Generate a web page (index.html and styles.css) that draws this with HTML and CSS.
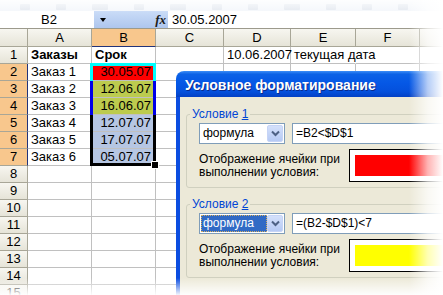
FILE: index.html
```html
<!DOCTYPE html>
<html>
<head>
<meta charset="utf-8">
<link rel="stylesheet" href="styles.css">
</head>
<body>
<div class="screen">
  <div class="toolbar">
    <span class="tbi"></span><span class="tbi"></span><span class="tbi w"></span><span class="tbi"></span><span class="tbi w"></span><span class="tbi"></span><span class="tbi"></span><span class="tbi w"></span><span class="tbi"></span><span class="tbi"></span><span class="tbi"></span>
  </div>
  <div class="fbar">
    <div class="namebox">B2</div>
    <div class="fbar-mid"><span class="arrow"></span><span class="fx">fx</span></div>
    <div class="finput">30.05.2007</div>
  </div>
  <div class="sheet">
    <div class="c h corner"></div><div class="c h">A</div><div class="c h hs hsb">B</div><div class="c h">C</div><div class="c h">D</div><div class="c h">E</div><div class="c h">F</div><div class="c h"></div>

    <div class="c rh">1</div><div class="c b">Заказы</div><div class="c b">Срок</div><div class="c"></div><div class="c r">10.06.2007</div><div class="c nob">текущая дата</div><div class="c"></div><div class="c"></div>

    <div class="c rh hs hsr">2</div><div class="c">Заказ 1</div><div class="c r red">30.05.07</div><div class="c"></div><div class="c"></div><div class="c"></div><div class="c"></div><div class="c"></div>
    <div class="c rh hs hsr">3</div><div class="c">Заказ 2</div><div class="c r ysel">12.06.07</div><div class="c"></div><div class="c"></div><div class="c"></div><div class="c"></div><div class="c"></div>
    <div class="c rh hs hsr">4</div><div class="c">Заказ 3</div><div class="c r ysel">16.06.07</div><div class="c"></div><div class="c"></div><div class="c"></div><div class="c"></div><div class="c"></div>
    <div class="c rh hs hsr">5</div><div class="c">Заказ 4</div><div class="c r sel">12.07.07</div><div class="c"></div><div class="c"></div><div class="c"></div><div class="c"></div><div class="c"></div>
    <div class="c rh hs hsr">6</div><div class="c">Заказ 5</div><div class="c r sel">17.07.07</div><div class="c"></div><div class="c"></div><div class="c"></div><div class="c"></div><div class="c"></div>
    <div class="c rh hs hsr">7</div><div class="c">Заказ 6</div><div class="c r sel">05.07.07</div><div class="c"></div><div class="c"></div><div class="c"></div><div class="c"></div><div class="c"></div>

    <div class="c rh">8</div><div class="c"></div><div class="c"></div><div class="c"></div><div class="c"></div><div class="c"></div><div class="c"></div><div class="c"></div>
    <div class="c rh">9</div><div class="c"></div><div class="c"></div><div class="c"></div><div class="c"></div><div class="c"></div><div class="c"></div><div class="c"></div>
    <div class="c rh">10</div><div class="c"></div><div class="c"></div><div class="c"></div><div class="c"></div><div class="c"></div><div class="c"></div><div class="c"></div>
    <div class="c rh">11</div><div class="c"></div><div class="c"></div><div class="c"></div><div class="c"></div><div class="c"></div><div class="c"></div><div class="c"></div>
    <div class="c rh">12</div><div class="c"></div><div class="c"></div><div class="c"></div><div class="c"></div><div class="c"></div><div class="c"></div><div class="c"></div>
    <div class="c rh">13</div><div class="c"></div><div class="c"></div><div class="c"></div><div class="c"></div><div class="c"></div><div class="c"></div><div class="c"></div>
    <div class="c rh">14</div><div class="c"></div><div class="c"></div><div class="c"></div><div class="c"></div><div class="c"></div><div class="c"></div><div class="c"></div>
    <div class="c rh">15</div><div class="c"></div><div class="c"></div><div class="c"></div><div class="c"></div><div class="c"></div><div class="c"></div><div class="c"></div>

    <div class="selbox"></div>
    <div class="handle"></div>
  </div>

  <div class="dialog">
    <div class="dtitle">Условное форматирование</div>
    <div class="dbody">
      <fieldset class="group">
        <legend>Условие <u>1</u></legend>
        <div class="grow">
          <div class="combo"><span class="ctext">формула</span><span class="cbtn"><svg width="9" height="7" viewBox="0 0 9 7"><path d="M1 1.5 L4.5 5 L8 1.5" fill="none" stroke="#4d6185" stroke-width="2"/></svg></span></div>
          <div class="finp">=B2&lt;$D$1</div>
        </div>
        <div class="grow2">
          <div class="ptext">Отображение ячейки при<br>выполнении условия:</div>
          <div class="preview"><div class="swatch red"></div></div>
        </div>
      </fieldset>
      <fieldset class="group g2">
        <legend>Условие <u>2</u></legend>
        <div class="grow">
          <div class="combo"><span class="ctext focus">формула</span><span class="cbtn"><svg width="9" height="7" viewBox="0 0 9 7"><path d="M1 1.5 L4.5 5 L8 1.5" fill="none" stroke="#4d6185" stroke-width="2"/></svg></span></div>
          <div class="finp">=(B2-$D$1)&lt;7</div>
        </div>
        <div class="grow2">
          <div class="ptext">Отображение ячейки при<br>выполнении условия:</div>
          <div class="preview"><div class="swatch yellow"></div></div>
        </div>
      </fieldset>
    </div>
  </div>

  <div class="fade fade-top"></div>
  <div class="fade fade-right"></div>
  <div class="fade fade-bottom"></div>
</div>
</body>
</html>
```

FILE: styles.css
```css
* { box-sizing: border-box; }
html, body { margin: 0; padding: 0; }
body {
  width: 443px;
  height: 295px;
  overflow: hidden;
  background: #fff;
  font-family: "Liberation Sans", Arial, sans-serif;
  color: #000;
}
.screen {
  position: relative;
  width: 443px;
  height: 295px;
  overflow: hidden;
}

/* toolbar */
.toolbar {
  height: 11px;
  background: #f4f7fb;
  display: flex;
  align-items: flex-end;
  gap: 26px;
  padding: 0 0 1px 20px;
}
.tbi {
  width: 10px;
  height: 6px;
  background: #e4e9f0;
  border-radius: 1px;
}
.tbi.w { width: 16px; }

/* formula bar */
.fbar {
  height: 18px;
  display: flex;
  border-bottom: 1px solid #9c9a8c;
  font-size: 13px;
  line-height: 17px;
}
.namebox {
  width: 94px;
  background: #fff;
  text-align: center;
  padding-left: 4px;
}
.fbar-mid {
  width: 74px;
  background: linear-gradient(#cadcf7, #aec6ee);
  display: flex;
  align-items: center;
  justify-content: space-between;
  padding: 0 2px 0 6px;
}
.arrow {
  width: 0;
  height: 0;
  border-left: 3.5px solid transparent;
  border-right: 3.5px solid transparent;
  border-top: 4px solid #000;
}
.fx {
  font-family: "Liberation Serif", serif;
  font-style: italic;
  font-weight: bold;
  font-size: 13px;
  color: #1a1a1a;
}
.finput {
  flex: 1;
  background: #fff;
  padding-left: 4px;
}

/* sheet */
.sheet {
  position: relative;
  display: grid;
  grid-template-columns: 28px 64px 64px 68px 67px 65px 64px 40px;
  grid-template-rows: 18px;
  grid-auto-rows: 17px;
}
.c {
  border-right: 1px solid #c0c0c0;
  border-bottom: 1px solid #c0c0c0;
  font-size: 13px;
  line-height: 16px;
  padding: 0 4px 0 3px;
  white-space: nowrap;
  overflow: visible;
}
.c.h, .c.rh {
  background: linear-gradient(#f7f6f0, #e6e4d8);
  border-right-color: #a8a697;
  border-bottom-color: #a8a697;
  text-align: center;
  padding: 0;
}
.c.h { line-height: 17px; }
.c.hs { background: #f8c78d; }
.c.hsb { border-bottom-color: #22337a; }
.c.hsr { border-right-color: #22337a; }
.c.b { font-weight: bold; }
.c.r { text-align: right; }
.c.nob { border-right-color: transparent; }
.c.red { background: #ff0000; }
.c.ysel { background: #bccb4e; }
.c.sel { background: #b6c6e3; }

.selbox {
  position: absolute;
  left: 90px;
  top: 34px;
  width: 66px;
  height: 103px;
  border: 3px solid;
  border-image: linear-gradient(to bottom, #00ffff 0, #00ffff 18px, #0000e8 18px, #0000e8 52px, #000 52px) 3;
  pointer-events: none;
}
.handle {
  position: absolute;
  left: 152px;
  top: 133px;
  width: 6px;
  height: 6px;
  background: #000;
  outline: 1px solid #fff;
}

/* dialog */
.dialog {
  position: absolute;
  left: 176px;
  top: 71px;
  width: 340px;
  height: 240px;
  display: flex;
  flex-direction: column;
}
.dtitle {
  height: 26px;
  border-radius: 8px 8px 0 0;
  background: linear-gradient(#3d8ef7 0, #0c62e6 12%, #0558e6 45%, #0450dc 80%, #0340c4 100%);
  color: #fff;
  font-weight: bold;
  font-size: 14px;
  line-height: 29px;
  padding-left: 9px;
  text-shadow: 1px 1px 0 #0a2a8c;
  white-space: nowrap;
}
.dbody {
  flex: 1;
  background: #ece9d8;
  border-left: 4px solid #0b4de0;
  padding: 11px 0 0 6px;
  font-size: 12px;
}
.group {
  margin: 0;
  padding: 2px 0 5px 3px;
  border: 1px solid #d0d0bf;
  border-radius: 3px;
  min-width: 0;
  width: 325px;
}
.group.g2 { margin-top: 10px; }
legend {
  padding: 0 2px;
  font-size: 12px;
  line-height: 13px;
  color: #0046d5;
}
legend u { text-decoration: underline; }
.grow {
  display: flex;
  gap: 7px;
  padding-left: 9px;
}
.combo {
  flex: none;
  width: 86px;
  height: 21px;
  border: 1px solid #7f9db9;
  background: #fff;
  display: flex;
  align-items: center;
  justify-content: space-between;
  padding: 1px;
}
.ctext {
  font-size: 12px;
  line-height: 15px;
  padding-left: 2px;
}
.ctext.focus {
  background: #316ac5;
  color: #fff;
  width: 66px;
  height: 17px;
  border: 1px dotted #d6b060;
  padding-left: 1px;
}
.cbtn {
  width: 16px;
  height: 17px;
  border-radius: 2px;
  background: linear-gradient(#d4e0fb, #b6caf4);
  border: 1px solid #c6d4f6;
  display: flex;
  align-items: center;
  justify-content: center;
}
.finp {
  flex: none;
  width: 200px;
  height: 21px;
  border: 1px solid #7f9db9;
  background: #fff;
  font-size: 12px;
  line-height: 19px;
  padding-left: 3px;
}
.grow2 {
  display: flex;
  align-items: center;
  margin-top: 5px;
  padding-left: 9px;
}
.ptext {
  flex: none;
  width: 150px;
  font-size: 12px;
  line-height: 13px;
  padding-top: 1px;
  white-space: nowrap;
}
.preview {
  flex: none;
  width: 150px;
  height: 33px;
  border: 1px solid #000;
  background: #fff;
  padding: 5px;
}
.swatch { height: 100%; }
.swatch.red { background: #ff0000; }
.swatch.yellow { background: #ffff00; }

/* fades */
.fade { position: absolute; pointer-events: none; }
.fade-top {
  left: 0; top: 0; width: 443px; height: 12px;
  background: linear-gradient(rgba(255,255,255,0.85), rgba(255,255,255,0));
}
.fade-right {
  right: 0; top: 0; width: 34px; height: 295px;
  background: linear-gradient(to right, rgba(255,255,255,0) 0, rgba(255,255,255,0.7) 55%, #fff 100%);
}
.fade-bottom {
  left: 0; bottom: 0; width: 443px; height: 17px;
  background: linear-gradient(rgba(255,255,255,0), rgba(255,255,255,0.95));
}
```
